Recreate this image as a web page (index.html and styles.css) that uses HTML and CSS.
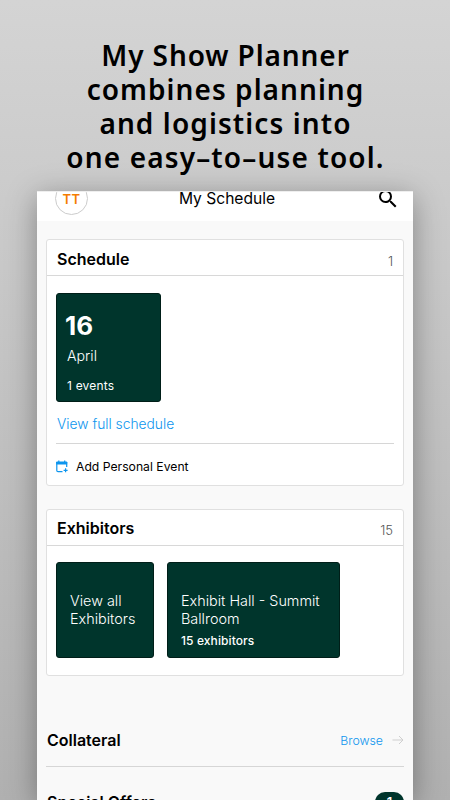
FILE: index.html
```html
<!doctype html>
<html lang="en">
  <head>
    <meta charset="UTF-8" />
    <meta name="viewport" content="width=device-width, initial-scale=1.0" />
    <title>My Show Planner</title>
    <link rel="stylesheet" href="styles.css">
  </head>
  <body>
    <h1 class="headline">
      <span class="line-one">My Show Planner</span>
      <span class="line-two">combines planning</span>
      <span class="line-three">and logistics into</span>
      <span class="line-four">one easy–to–use tool.</span>
    </h1>

    <div class="phone">
      <header class="topbar">
        <div class="avatar">TT</div>
        <div class="title">My Schedule</div>
        <svg class="search" viewBox="0 0 24 24" width="24" height="24">
          <path fill="#000" d="M15.5 14h-.79l-.28-.27A6.47 6.47 0 0 0 16 9.5 6.5 6.5 0 1 0 9.5 16c1.61 0 3.09-.59 4.23-1.57l.27.28v.79l5 4.99L20.49 19l-4.99-5zm-6 0a4.5 4.5 0 1 1 0-9 4.5 4.5 0 0 1 0 9z"/>
        </svg>
      </header>

      <main>
        <section class="card">
          <div class="card-header">
            <h2>Schedule</h2>
            <span class="count">1</span>
          </div>
          <div class="card-body">
            <div class="tile date-tile">
              <div class="day">16</div>
              <div class="month">April</div>
              <div class="events">1 events</div>
            </div>
            <a class="full-link">View full schedule</a>
            <div class="add-event">
              <svg viewBox="0 0 12 13" width="12" height="13" fill="none" stroke="#0d95ee">
                <path stroke-width="1.2" d="M6.5 11.6H2Q.8 11.6.8 10.4V2.6H10.7V7"/>
                <path fill="#0d95ee" stroke="none" d="M.2 2.2Q.2 1.4 1 1.4H10.4Q11.2 1.4 11.2 2.2V4.5H.2z"/>
                <path stroke-width="1.2" d="M2.8.4V2M8.7.4V2M9.6 8.3V12.3M7.6 10.3H11.6"/>
              </svg>
              <span>Add Personal Event</span>
            </div>
          </div>
        </section>

        <section class="card">
          <div class="card-header">
            <h2>Exhibitors</h2>
            <span class="count">15</span>
          </div>
          <div class="card-body exhibitors">
            <div class="tile all-tile">
              <div class="name">View all<br>Exhibitors</div>
            </div>
            <div class="tile hall-tile">
              <div class="name">Exhibit Hall - Summit<br>Ballroom</div>
              <div class="amount">15 exhibitors</div>
            </div>
          </div>
        </section>

        <div class="row">
          <h2>Collateral</h2>
          <a class="browse">Browse</a>
          <svg viewBox="0 0 12 10" width="12" height="10" fill="none" stroke="#cfcfcf">
            <path d="M.5 5H11M7 1L11 5L7 9"/>
          </svg>
        </div>
        <div class="row offers">
          <h2>Special Offers</h2>
          <span class="badge">1</span>
        </div>
      </main>
    </div>
  </body>
</html>
```

FILE: styles.css
```css
* {
  box-sizing: border-box;
}
body {
  margin: 0;
  height: 800px;
  overflow: hidden;
  background: linear-gradient(#d4d4d4, #b0b0b0);
  font-family: Inter, "Liberation Sans", sans-serif;
  color: #000;
}
h1, h2 {
  margin: 0;
}
.headline {
  height: 191px;
  padding-top: 38px;
  font-family: "Noto Sans", "Open Sans", sans-serif;
  font-size: 28px;
  font-weight: 600;
  line-height: 34px;
  text-align: center;
}
.headline span {
  display: block;
  padding-left: 1px;
  white-space: nowrap;
}
.line-one {
  letter-spacing: 0.9px;
}
.line-two {
  letter-spacing: 1.05px;
}
.line-three {
  letter-spacing: 1.1px;
}
.line-four {
  letter-spacing: 1.15px;
}
.phone {
  width: 376px;
  height: 609px;
  margin-left: 37px;
  overflow: hidden;
  background-color: #f9f9f9;
  box-shadow: 0 6px 28px rgba(0, 0, 0, 0.35);
}
.topbar {
  display: flex;
  justify-content: space-between;
  height: 30px;
  padding: 0 13px 0 18px;
  overflow: hidden;
  background-color: #fff;
  border-top: 1px solid #eee;
}
.avatar {
  width: 33px;
  height: 33px;
  margin-top: -10px;
  border: 1px solid #ccc;
  border-radius: 50%;
  color: #f57c00;
  font-size: 13px;
  font-weight: 600;
  letter-spacing: 0.4px;
  line-height: 32px;
  text-align: center;
}
.title {
  margin-left: -10px;
  font-size: 15.6px;
  line-height: 13px;
}
.search {
  margin-top: -5px;
}
main {
  padding: 18px 9px 0;
}
.card {
  height: 247px;
  margin-bottom: 23px;
  background-color: #fff;
  border: 1px solid #e0e0e0;
  border-radius: 3px;
}
.card + .card {
  height: 167px;
  margin-bottom: 43px;
}
.card-header {
  display: flex;
  justify-content: space-between;
  height: 36px;
  padding: 0 10px 0 10px;
  border-bottom: 1px solid #d8d8d8;
}
h2 {
  font-size: 16px;
  font-weight: 600;
  line-height: 38px;
}
.card + .card h2 {
  line-height: 37px;
}
.count {
  color: #555;
  font-size: 13px;
  font-weight: 300;
  line-height: 42px;
}
.card + .card .count {
  line-height: 41px;
}
.card-body {
  padding: 17px 9px 0;
}
.tile {
  background-color: #00352c;
  border: 1px solid #001e18;
  border-radius: 3px;
  color: #fff;
}
.date-tile {
  width: 105px;
  height: 109px;
  padding: 17px 10px 0;
}
.day {
  margin-left: -2px;
  font-size: 26px;
  font-weight: 700;
  line-height: 30px;
}
.month {
  margin-top: 6px;
  font-size: 14.2px;
  font-weight: 350;
  line-height: 18px;
}
.events {
  margin-top: 13px;
  font-size: 12px;
  letter-spacing: 0.2px;
  line-height: 16px;
}
.full-link {
  display: block;
  height: 42px;
  padding-left: 1px;
  border-bottom: 1px solid #d6d6d6;
  color: #0d95ee;
  font-size: 13.8px;
  font-weight: 350;
  line-height: 44px;
}
.add-event {
  display: flex;
  align-items: center;
  gap: 8px;
  height: 45px;
  font-size: 12.2px;
  font-weight: 400;
}
.exhibitors {
  display: flex;
  gap: 13px;
  padding-top: 16px;
}
.exhibitors .tile {
  height: 96px;
  padding: 29px 13px 0;
}
.all-tile {
  width: 98px;
}
.hall-tile {
  width: 173px;
}
.name {
  font-size: 14.4px;
  font-weight: 350;
  line-height: 17.5px;
  white-space: nowrap;
}
.amount {
  margin-top: 6px;
  font-size: 12px;
  font-weight: 500;
  letter-spacing: 0.1px;
  line-height: 16px;
}
.row {
  display: flex;
  align-items: center;
  height: 48px;
  padding-bottom: 5px;
  border-bottom: 1px solid #d6d6d6;
}
.row h2 {
  flex-grow: 1;
  margin-left: 1px;
  line-height: 20px;
}
.browse {
  margin-right: 9px;
  color: #0d95ee;
  font-size: 12.3px;
  font-weight: 350;
}
.offers {
  height: 70px;
  padding-bottom: 0;
  border: 0;
}
.badge {
  width: 29px;
  height: 20px;
  border-radius: 10px;
  background-color: #00352c;
  color: #fff;
  font-size: 13px;
  font-weight: 600;
  line-height: 20px;
  text-align: center;
}
```
